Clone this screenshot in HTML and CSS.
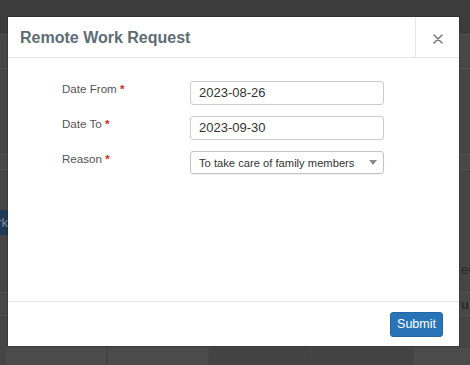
FILE: index.html
```html
<!DOCTYPE html>
<html lang="en">
<head>
    <meta charset="UTF-8">
    <meta name="viewport" content="width=device-width, initial-scale=1.0">
    <title>Remote Work Request</title>
    <link rel="stylesheet" href="styles.css">
</head>
<body>
    <!-- Página por trás do modal (escurecida) -->
    <div class="page">
        <div class="page-top"></div>
        <div class="page-row row-a"></div>
        <div class="page-gap tall"></div>
        <div class="page-row row-b"></div>
        <div class="page-gap mid">
            <span class="page-btn">rk</span>
        </div>
        <div class="page-gap text-row"><span class="page-text">ee</span></div>
        <div class="page-row row-c"><span class="page-text bold">u</span></div>
        <div class="page-gap short"></div>
        <div class="page-cells">
            <div class="cell"></div>
            <div class="cell"></div>
            <div class="cell dark"></div>
            <div class="cell dark"></div>
            <div class="cell"></div>
        </div>
    </div>

    <div class="modal">
        <div class="modal-header">
            <h4 class="modal-title">Remote Work Request</h4>
            <button class="modal-close" type="button">
                <svg width="10" height="10" viewBox="0 0 10 10">
                    <path d="M1 1 L9 9 M9 1 L1 9" stroke="#7a7a7a" stroke-width="1.6" stroke-linecap="round"/>
                </svg>
            </button>
        </div>

        <div class="modal-body">
            <div class="form-row">
                <label class="form-label">Date From <span class="req">*</span></label>
                <div class="form-input">2023-08-26</div>
            </div>
            <div class="form-row">
                <label class="form-label">Date To <span class="req">*</span></label>
                <div class="form-input">2023-09-30</div>
            </div>
            <div class="form-row">
                <label class="form-label">Reason <span class="req">*</span></label>
                <div class="form-select">
                    <span>To take care of family members</span>
                    <svg width="8" height="5" viewBox="0 0 8 5">
                        <path d="M0 0 L8 0 L4 5 Z" fill="#8a8a8a"/>
                    </svg>
                </div>
            </div>
        </div>

        <div class="modal-footer">
            <button class="btn-submit" type="button">Submit</button>
        </div>
    </div>
</body>
</html>
```

FILE: styles.css
```css
body {
    margin: 0;
    width: 470px;
    height: 365px;
    overflow: hidden;
    background-color: #454545;
    font-family: "Helvetica Neue", "Liberation Sans", Arial, sans-serif;
    position: relative;
}

/* Fundo */
.page {
    display: flex;
    flex-direction: column;
    height: 365px;
}

.page-top {
    height: 34px;
    background-color: #3c3c3c;
    border-bottom: 1px solid #505050;
}

.page-row {
    border-bottom: 1px solid #505050;
}

.row-a {
    height: 33px;
    background-color: #474747;
}

.page-gap.tall {
    height: 85px;
    border-bottom: 1px solid #505050;
}

.row-b {
    height: 14px;
    background-color: #484848;
}

.page-gap.mid {
    padding-top: 40px;
    box-sizing: border-box;
    height: 92px;
}

.page-btn {
    display: block;
    width: 8px;
    height: 25px;
    background-color: #1e3a54;
    color: #7e8c99;
    font-size: 13px;
    line-height: 25px;
    overflow: hidden;
    direction: rtl;
}

.page-gap.text-row {
    height: 30px;
    border-bottom: 1px solid #505050;
    display: flex;
    justify-content: flex-end;
    align-items: flex-start;
}

.page-text {
    color: #2a2a2a;
    font-size: 13px;
    width: 9px;
    overflow: hidden;
}

.page-text.bold {
    font-weight: bold;
}

.row-c {
    height: 22px;
    display: flex;
    justify-content: flex-end;
    align-items: center;
    background-color: #484848;
}

.page-gap.short {
    flex: 1;
}

.page-cells {
    display: flex;
    gap: 2px;
    height: 17px;
    padding-left: 6px;
}

.cell {
    width: 100px;
    background-color: #4b4b4b;
}

.cell.dark {
    background-color: #434343;
}

.cell:last-child {
    flex: 1;
}

/* Modal */
.modal {
    position: absolute;
    left: 8px;
    top: 17px;
    width: 451px;
    height: 329px;
    background-color: #ffffff;
    display: flex;
    flex-direction: column;
    box-shadow: 0 0 0 1px rgba(0, 0, 0, 0.15);
}

.modal-header {
    display: flex;
    height: 40px;
    border-bottom: 1px solid #e6e6e6;
}

.modal-title {
    flex: 1;
    margin: 0;
    padding-left: 12px;
    font-size: 16px;
    font-weight: 600;
    color: #5c6d75;
    line-height: 42px;
}

.modal-close {
    width: 44px;
    border: none;
    border-left: 1px solid #e6e6e6;
    background: none;
    padding: 4px 0 0 0;
    display: flex;
    align-items: center;
    justify-content: center;
}

.modal-body {
    flex: 1;
    padding: 23px 0 0 54px;
    display: flex;
    flex-direction: column;
    gap: 11px;
}

.form-row {
    display: flex;
    align-items: flex-start;
}

.form-label {
    width: 128px;
    font-size: 11.6px;
    color: #555555;
    line-height: 16px;
}

.req {
    color: #e02020;
    font-weight: bold;
}

.form-input,
.form-select {
    width: 194px;
    height: 24px;
    box-sizing: border-box;
    border: 1px solid #cccccc;
    border-radius: 3px;
    padding: 0 8px;
    font-size: 13px;
    color: #333333;
    line-height: 22px;
}

.form-select {
    height: 23px;
    font-size: 11.2px;
    padding-right: 6px;
    display: flex;
    justify-content: space-between;
    align-items: center;
    border-color: #c4c4c4;
    box-shadow: 0 1px 1px rgba(0, 0, 0, 0.06);
}

.modal-footer {
    height: 44px;
    border-top: 1px solid #e6e6e6;
    display: flex;
    justify-content: flex-end;
    align-items: center;
    padding-right: 16px;
}

.btn-submit {
    width: 53px;
    height: 25px;
    border: 1px solid #2267a8;
    border-radius: 3px;
    background-color: #2874b7;
    color: #ffffff;
    font-family: inherit;
    font-size: 12.5px;
    padding: 0;
}
```
